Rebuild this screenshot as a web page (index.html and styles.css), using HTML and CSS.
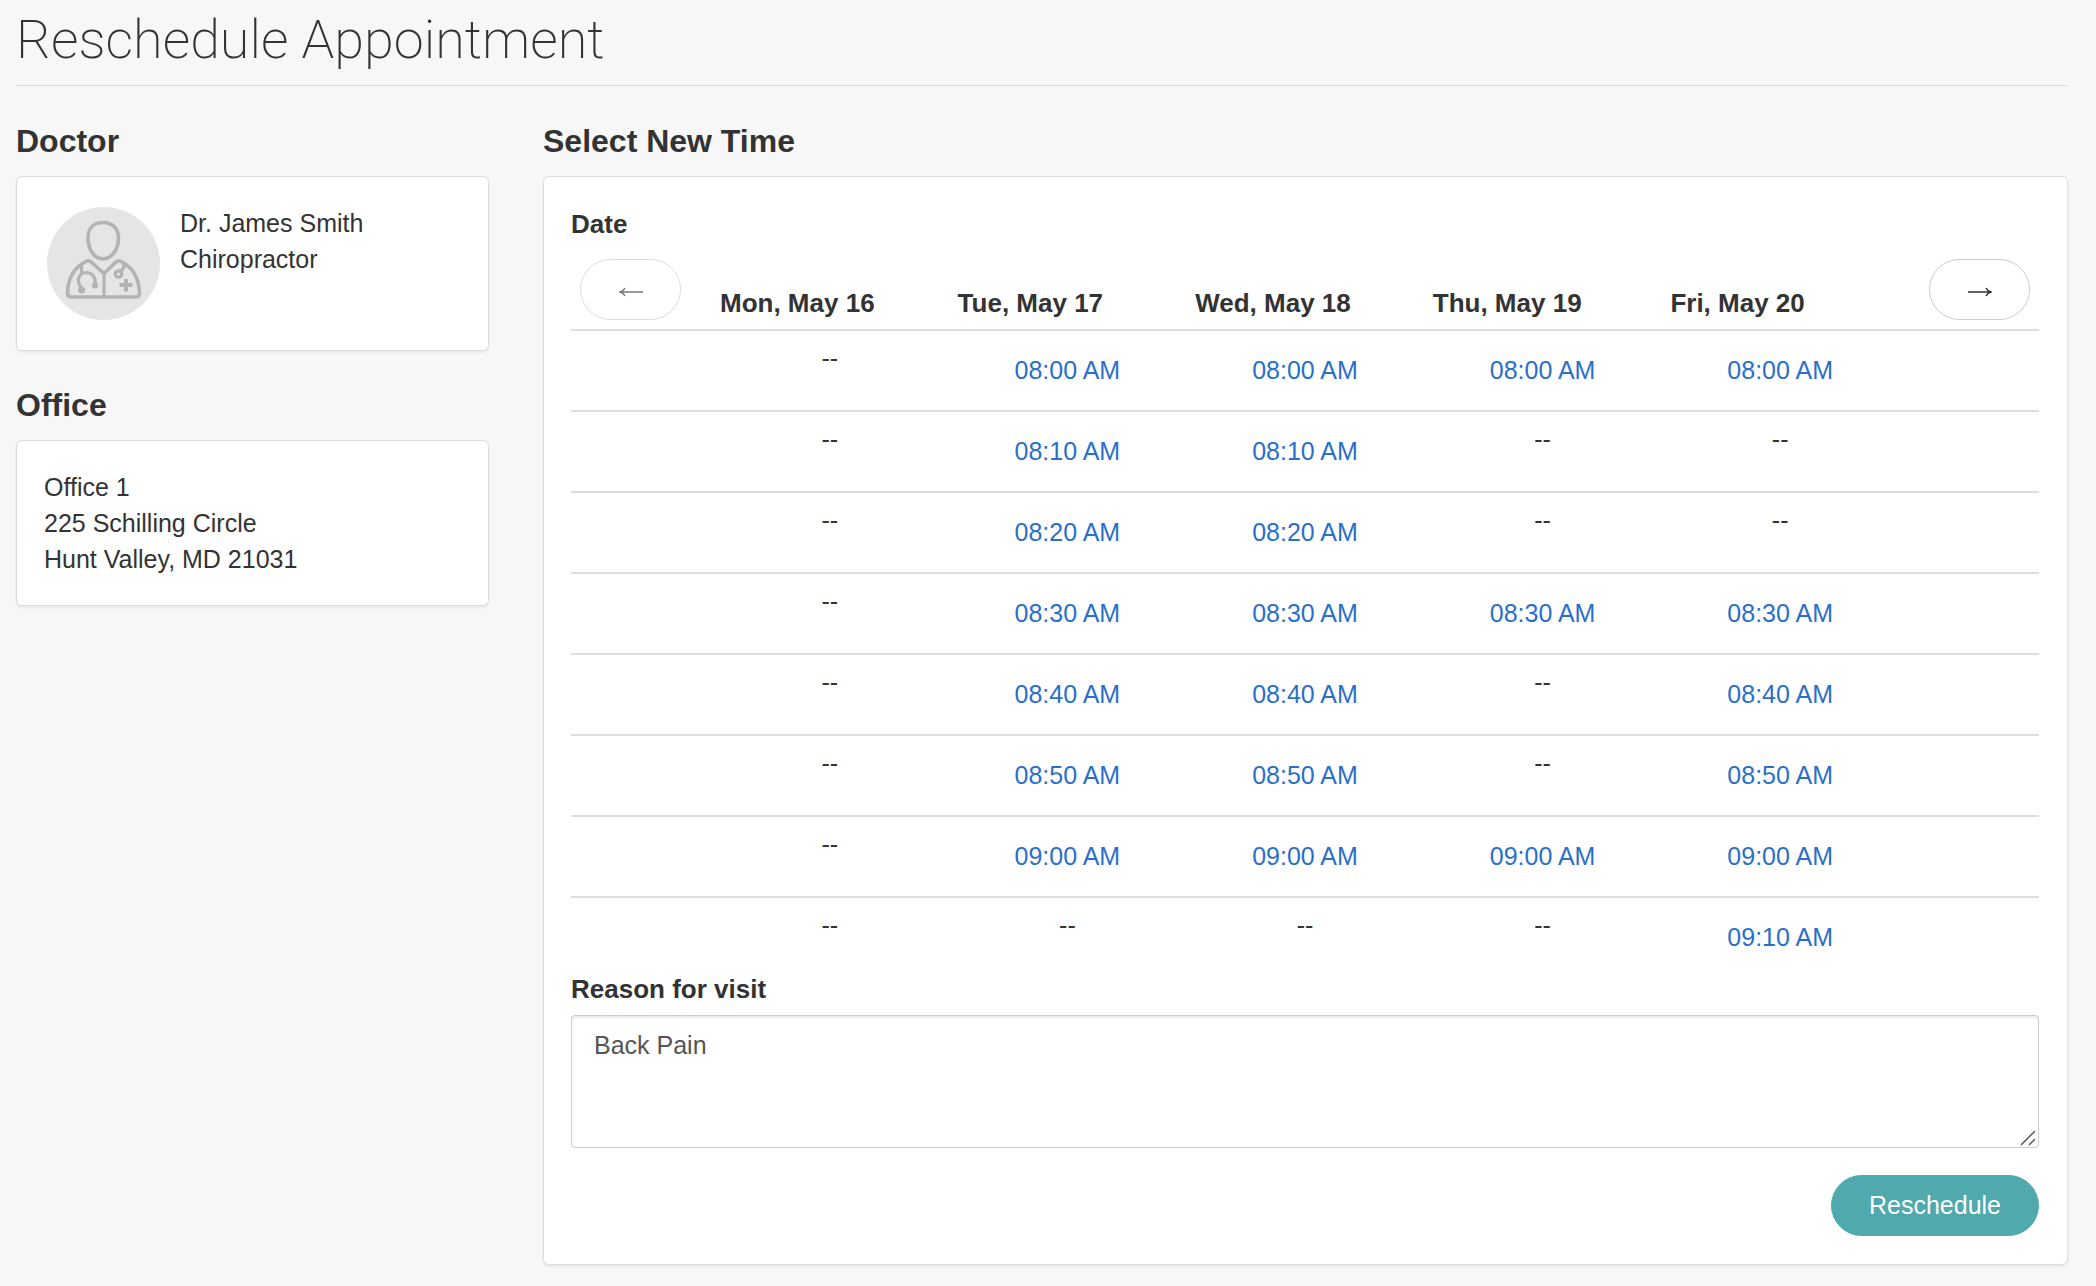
FILE: index.html
```html
<!DOCTYPE html>
<html lang="en">
<head>
<meta charset="utf-8">
<meta name="viewport" content="width=device-width, initial-scale=1">
<title>Reschedule Appointment</title>
<link rel="stylesheet" href="styles.css">
</head>
<body>
<header class="page-header">
  <h1 class="page-title">Reschedule Appointment</h1>
</header>
<main class="layout">
  <aside class="sidebar">
    <section>
      <h2 class="section-title">Doctor</h2>
      <div class="card doctor">
        <svg class="avatar" viewBox="0 0 113 113" aria-hidden="true">
          <circle cx="56.5" cy="56.5" r="56.5" fill="#e5e5e5"/>
          <g fill="none" stroke="#b3b3b3" stroke-width="3.6" stroke-linejoin="round" stroke-linecap="round">
            <path d="M56 15.500C46 15.500 41 22 41 31C41 42 47 52 56 52S71.500 42 71.500 31C71.500 22 66 15.500 56 15.500Z"/>
            <path d="M57 66.500L43.500 54.500Q41.500 53 39 54.500C28 60 21 71 20.500 86Q20.500 90 24.500 90H88.500Q92.500 90 92.500 86C92 71 85 60 74 54.500Q71.500 53 69.500 54.500Z"/>
            <path d="M57 66.500V89" stroke-width="3.2"/>
            <path d="M34.500 58V65M34.500 81C29 74 31 66 39.500 65.500C46 66 49 71 48 77" stroke-width="3.2"/>
            <path d="M77 57V60Q76 63 72.500 64" stroke-width="3.2"/>
            <circle cx="71.500" cy="67" r="3.200" stroke-width="3.2"/>
          </g>
          <g fill="#b3b3b3">
            <circle cx="34.500" cy="83" r="3.500"/>
            <circle cx="48" cy="78.500" r="3"/>
            <path d="M77 72h4v4h4.500v4H81v4.500h-4V80h-4.500v-4H77z"/>
          </g>
        </svg>
        <p class="lines">Dr. James Smith<br>Chiropractor</p>
      </div>
    </section>
    <section>
      <h2 class="section-title">Office</h2>
      <address class="card lines">Office 1<br>225 Schilling Circle<br>Hunt Valley, MD 21031</address>
    </section>
  </aside>
  <section>
    <h2 class="section-title">Select New Time</h2>
    <form class="card">
      <h3 class="date-label" id="date-label">Date</h3>
      <table class="slots" aria-labelledby="date-label">
        <colgroup><col class="nav-col"><col span="5"><col class="nav-col"></colgroup>
        <thead>
          <tr>
            <td><button class="btn btn-arrow" type="button" aria-label="Previous week" disabled><svg class="arrow" viewBox="0 0 24 10" aria-hidden="true"><path d="M24 5H2M6 1Q4.500 4 1 5Q4.500 6 6 9"/></svg></button></td>
            <th scope="col">Mon, May 16</th>
            <th scope="col">Tue, May 17</th>
            <th scope="col">Wed, May 18</th>
            <th scope="col">Thu, May 19</th>
            <th scope="col">Fri, May 20</th>
            <td><button class="btn btn-arrow btn-next" type="button" aria-label="Next week"><svg class="arrow" viewBox="0 0 24 10" aria-hidden="true"><path d="M0 5H22M18 1Q19.500 4 23 5Q19.500 6 18 9"/></svg></button></td>
          </tr>
        </thead>
        <tbody>
          <tr><td></td><td>--</td><td><a href="#">08:00 AM</a></td><td><a href="#">08:00 AM</a></td><td><a href="#">08:00 AM</a></td><td><a href="#">08:00 AM</a></td><td></td></tr>
          <tr><td></td><td>--</td><td><a href="#">08:10 AM</a></td><td><a href="#">08:10 AM</a></td><td>--</td><td>--</td><td></td></tr>
          <tr><td></td><td>--</td><td><a href="#">08:20 AM</a></td><td><a href="#">08:20 AM</a></td><td>--</td><td>--</td><td></td></tr>
          <tr><td></td><td>--</td><td><a href="#">08:30 AM</a></td><td><a href="#">08:30 AM</a></td><td><a href="#">08:30 AM</a></td><td><a href="#">08:30 AM</a></td><td></td></tr>
          <tr><td></td><td>--</td><td><a href="#">08:40 AM</a></td><td><a href="#">08:40 AM</a></td><td>--</td><td><a href="#">08:40 AM</a></td><td></td></tr>
          <tr><td></td><td>--</td><td><a href="#">08:50 AM</a></td><td><a href="#">08:50 AM</a></td><td>--</td><td><a href="#">08:50 AM</a></td><td></td></tr>
          <tr><td></td><td>--</td><td><a href="#">09:00 AM</a></td><td><a href="#">09:00 AM</a></td><td><a href="#">09:00 AM</a></td><td><a href="#">09:00 AM</a></td><td></td></tr>
          <tr><td></td><td>--</td><td>--</td><td>--</td><td>--</td><td><a href="#">09:10 AM</a></td><td></td></tr>
        </tbody>
      </table>
      <label class="reason-label" for="reason">Reason for visit</label>
      <div class="reason-field">
        <textarea class="reason" id="reason">Back Pain</textarea>
        <svg class="grip" viewBox="0 0 16 16" aria-hidden="true"><path d="M1 15L15 1M9 15L15 9"/></svg>
      </div>
      <div class="actions">
        <button class="btn btn-primary" type="submit">Reschedule</button>
      </div>
    </form>
  </section>
</main>
</body>
</html>
```

FILE: styles.css
```css
* {
  box-sizing: border-box;
}

body {
  margin: 0;
  padding: 6px 28px 20px 16px;
  background: #f7f7f7;
  color: #333;
  font: 25px/36px "Liberation Sans", Arial, sans-serif;
}

h1, h2, h3, p {
  margin: 0;
}

.page-header {
  margin-bottom: 37px;
  padding-bottom: 11px;
  border-bottom: 1px solid #ddd;
}

.page-title {
  font: 200 54px/68px Roboto, sans-serif;
}

.layout {
  display: grid;
  grid-template-columns: 473fr 1525fr;
  gap: 54px;
  align-items: start;
}

.sidebar {
  display: grid;
  gap: 36px;
}

.section-title {
  margin-bottom: 17px;
  font-size: 32px;
  line-height: 36px;
}

.card {
  padding: 28px 28px 28px 27px;
  background: #fff;
  border: 1px solid #ddd;
  border-radius: 6px;
  box-shadow: 0 2px 3px rgba(0, 0, 0, 0.06);
}

.doctor {
  display: flex;
  align-items: flex-start;
  gap: 18px;
}

.avatar {
  width: 113px;
  height: 113px;
  margin: 2px 2px 2px 3px;
}

.lines {
  font-style: normal;
}

.date-label {
  margin-bottom: 7px;
  font-size: 26px;
  line-height: 38px;
}

.slots {
  width: 100%;
  table-layout: fixed;
  border-collapse: separate;
  border-spacing: 0;
}

.nav-col {
  width: 140px;
}

.slots th,
.slots td {
  padding: 9px;
  text-align: center;
  vertical-align: top;
}

.slots th {
  padding-bottom: 8px;
  font-size: 26px;
  text-align: left;
  vertical-align: bottom;
}

.slots tbody td {
  border-top: 2px solid #ddd;
}

.slots a {
  display: block;
  padding: 12px 0 13px;
  color: #2a6fc9;
  text-decoration: none;
}

.btn {
  display: block;
  height: 61px;
  border: 1px solid #ccc;
  border-radius: 31px;
  background: #fff;
  color: #333;
  font: inherit;
}

.btn:disabled {
  opacity: 0.65;
}

.btn-arrow {
  width: 101px;
  padding: 4px 0 0;
}

.btn-next {
  margin-left: auto;
}

.arrow {
  display: block;
  width: 24px;
  height: 10px;
  margin: 0 auto;
  fill: none;
  stroke: currentColor;
  stroke-width: 1.6;
}

.reason-label {
  display: block;
  margin-bottom: 14px;
  font-size: 26px;
  font-weight: bold;
  line-height: 24px;
}

.reason-field {
  position: relative;
}

.reason {
  display: block;
  width: 100%;
  height: 133px;
  padding: 11px 22px;
  border: 1px solid #ccc;
  border-radius: 4px;
  box-shadow: inset 0 2px 2px rgba(0, 0, 0, 0.075);
  color: #555;
  font: inherit;
  resize: none;
}

.grip {
  position: absolute;
  right: 3px;
  bottom: 2px;
  width: 16px;
  height: 16px;
  fill: none;
  stroke: #555;
  stroke-width: 1.5;
  pointer-events: none;
}

.actions {
  display: flex;
  justify-content: flex-end;
  margin-top: 27px;
}

.btn-primary {
  padding: 0 37px 2px;
  border-color: #50a9ad;
  background: #50a9ad;
  color: #fff;
}
```
